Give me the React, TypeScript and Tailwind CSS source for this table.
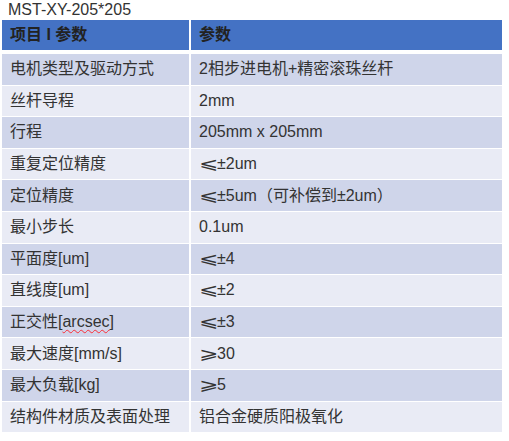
const Le = () => (
  <span className="inline-block origin-left scale-x-[1.45] mr-[5px]">⩽</span>
);
const Ge = () => (
  <span className="inline-block origin-left scale-x-[1.45] mr-[5px]">⩾</span>
);

const rows: [React.ReactNode, React.ReactNode][] = [
  ["电机类型及驱动方式", "2相步进电机+精密滚珠丝杆"],
  ["丝杆导程", "2mm"],
  ["行程", "205mm x 205mm"],
  ["重复定位精度", <><Le />±2um</>],
  ["定位精度", <><Le />±5um（可补偿到±2um）</>],
  ["最小步长", "0.1um"],
  ["平面度[um]", <><Le />±4</>],
  ["直线度[um]", <><Le />±2</>],
  [
    <>
      正交性[<span className="underline decoration-wavy decoration-red-500 decoration-1 underline-offset-2">arcsec</span>]
    </>,
    <><Le />±3</>,
  ],
  ["最大速度[mm/s]", <><Ge />30</>],
  ["最大负载[kg]", <><Ge />5</>],
  ["结构件材质及表面处理", "铝合金硬质阳极氧化"],
];

export default function App() {
  return (
    <div
      className="w-[509px] h-[441px] bg-white text-[#333333]"
      style={{ fontFamily: '"Liberation Sans", "Noto Sans CJK SC", sans-serif' }}
    >
      <div className="pl-2 pt-[1px] h-5 text-[16px] leading-[18px]">MST-XY-205*205</div>
      <div className="ml-[2px] w-[500px] flex flex-col">
        <div className="grid grid-cols-[187px_311px] gap-x-[2px] h-[30px] mb-1">
          <div className="bg-[#4472c4] px-2 flex items-center font-bold text-[16px] text-[#222]">
            项目 I 参数
          </div>
          <div className="bg-[#4472c4] px-2 flex items-center font-bold text-[16px] text-[#222]">
            参数
          </div>
        </div>
        <div className="flex flex-col gap-px">
          {rows.map(([k, v], i) => {
            const bg = i % 2 === 0 ? "bg-[#cfd5ea]" : "bg-[#e9ebf5]";
            return (
              <div key={i} className="grid grid-cols-[187px_311px] gap-x-[2px] h-[30.6px] text-[16px]">
                <div className={`px-2 flex items-center ${bg}`}>{k}</div>
                <div className={`px-2 flex items-center ${bg}`}>{v}</div>
              </div>
            );
          })}
        </div>
      </div>
    </div>
  );
}
